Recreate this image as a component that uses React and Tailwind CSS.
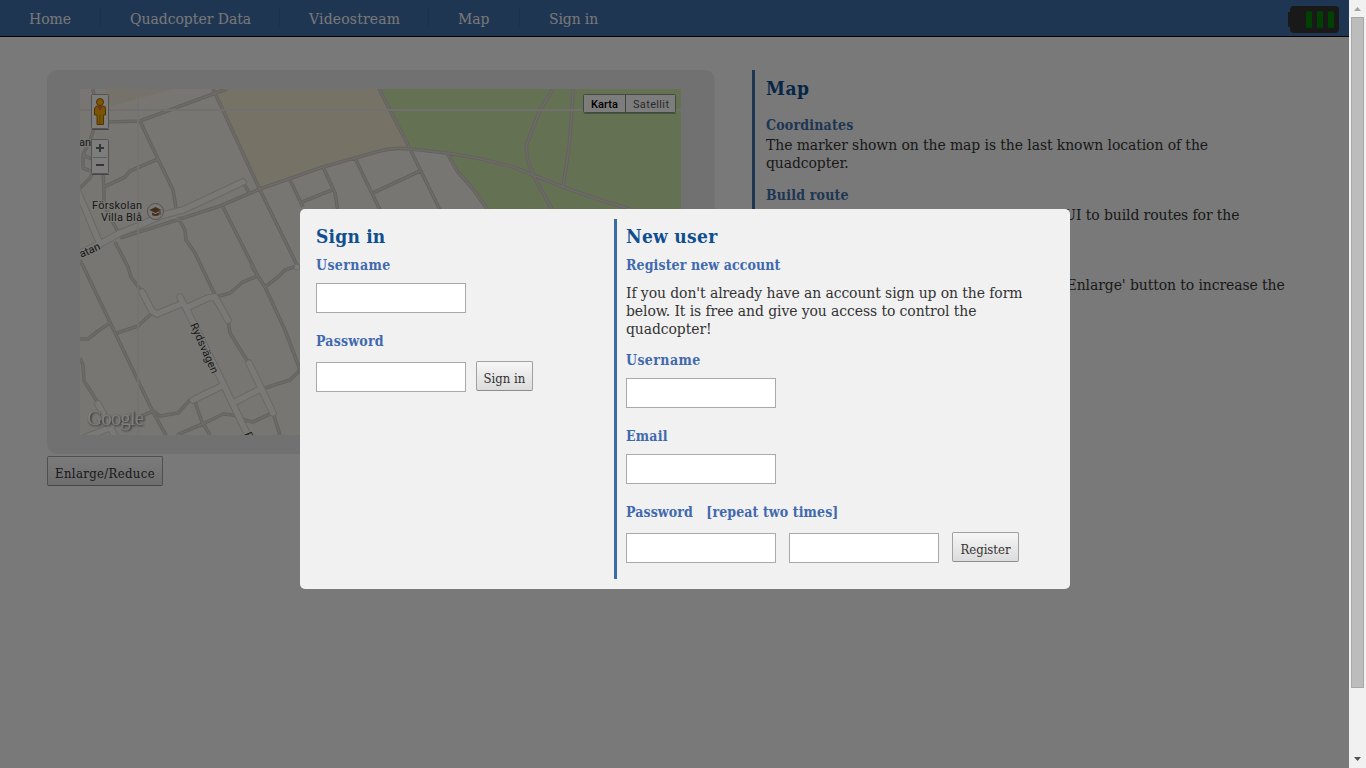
const serif = "font-['DejaVu_Serif_Condensed','DejaVu_Serif',serif]";

function Nav() {
  return (
    <nav className="flex h-[37px] shrink-0 items-center border-b border-black bg-[#3e6ca6] text-[15.5px] leading-[36px] text-[#f0f0f0]">
      <a className="w-[100px] pt-[2px] pl-[29px]">Home</a>
      <i className="h-[18px] w-px bg-[#38629a]" />
      <a className="w-[178px] pt-[2px] pl-[29px]">Quadcopter Data</a>
      <i className="h-[18px] w-px bg-[#38629a]" />
      <a className="w-[148px] pt-[2px] pl-[29px] tracking-[0.2px]">Videostream</a>
      <i className="h-[18px] w-px bg-[#38629a]" />
      <a className="w-[90px] pt-[2px] pl-[29px]">Map</a>
      <i className="h-[18px] w-px bg-[#38629a]" />
      <a className="pt-[2px] pl-[29px] tracking-[-0.1px]">Sign in</a>
      <svg className="mt-[2px] mr-[10px] ml-auto h-[27px] w-[51px]" viewBox="0 0 51 27">
        <rect x="0" y="6" width="5" height="15" rx="0.5" fill="#333" />
        <rect x="2" y="0" width="49" height="27" rx="4" fill="#333" />
        <rect x="18" y="5" width="6" height="17" rx="1.5" fill="#008000" />
        <rect x="29" y="5" width="6" height="17" rx="1.5" fill="#008000" />
        <rect x="40" y="5" width="6" height="17" rx="1.5" fill="#008000" />
      </svg>
    </nav>
  );
}

const paths = [
  "M93 89L94 95M94 128L91 138L83 155V168L93 172L90 178L80 188M83 155L92 159",
  "M103 173L104 188L104 205L118 232",
  "M104 187L125 177L130 171L158 159",
  "M108 122L140 121L213 94L227 89",
  "M140 121L158 159L173 190L176 208",
  "M213 89L260 190L297 265",
  "M120 238L183 218L220 206L260 189L323 167L355 158L380 151Q393 147 410 149L447 153L477 158L513 167L533 175L563 187L600 200L630 209",
  "M290 180L303 207M302 202L332 190M323 167L335 193L338 212M355 158L380 210M373 193L420 171M379 89L410 149L440 210",
  "M447 153L457 171L472 188L488 210",
  "M553 89L540 110L526 146L528 161L533 175L552 209M573 89L572 110L569 148L563 187",
  "M244 184L250 194M223 207L260 280M178 217L185 230L186 240L195 253L216 297",
  "M297 266L285 270L278 277L265 287M251 265L265 287L285 330L300 370",
  "M257 276L243 282L230 293L216 297M115 242L128 267L131 277L142 292",
  "M80 260L85 270L153 412L167 437M80 339H88L98 331L110 323M117 333L138 326L152 313",
  "M80 358L83 365L84 381L90 390L98 403M140 417L153 411L160 416L178 413L190 400",
  "M195 402L202 422L210 435M177 435L205 423L223 414L233 415L245 420L253 422L270 414",
  "M273 413L280 435M228 320L230 333L248 362M265 388L290 380L300 370",
];

const streets = [
  "M78 192L100 244L120 233L138 226L163 215L183 210L243 182M102 243L78 254",
  "M142 292L152 311L157 314L181 304M180 297L187 310L220 377L250 440",
  "M188 307L208 298L215 297L228 320M193 400L222 386M235 402L260 389M249 363L273 413",
  "M98 404L117 440M86 437L112 427",
];

function StreetMap() {
  const thin = paths.join("");
  const wide = streets.join("");
  return (
    <svg className="block h-[346px] w-[601px] font-[Roboto,sans-serif]" viewBox="80 89 601 346">
      <rect x="80" y="89" width="601" height="346" fill="#f0ede4" />
      <path d="M105 89H173L110 107Z" fill="#efe5d2" />
      <path d="M213 89H379L410 149L380 151L323 167L260 190Z" fill="#efe4cc" />
      <path d="M379 89H681V210H488L472 188L457 171L447 153L410 149Z" fill="#cbe2a6" />
      <g fill="none" strokeLinejoin="round">
        <path d={thin} stroke="#c8c5bd" strokeWidth="3.6" />
        <path d={thin} stroke="#dad7d0" strokeWidth="1.5" />
        <path d={wide} stroke="#d2cfc6" strokeWidth="7.5" strokeLinecap="round" />
        <path d={wide} stroke="#f4f3f0" strokeWidth="5.5" strokeLinecap="round" />
      </g>
      <circle cx="297" cy="267" r="3" fill="#f4f3f0" stroke="#d2cfc6" />
      <path d="M138 89V435" stroke="#e7e5e2" strokeWidth="1.6" />
      <path d="M80 110H681" stroke="#e3e0df" strokeWidth="2" />

      <g fill="#333" stroke="#f3f1eb" strokeWidth="2" paintOrder="stroke" fontSize="11">
        <text x="79" y="146">an</text>
        <text x="92" y="209" textLength="50">Förskolan</text>
        <text x="101" y="221" textLength="41">Villa Blå</text>
        <text transform="translate(83 257) rotate(-24)" x="-2" y="0">atan</text>
        <text transform="translate(190 325) rotate(66)" textLength="54">Rydsvägen</text>
        <text transform="translate(244 434) rotate(66)">R</text>
      </g>
      <g>
        <circle cx="155.500" cy="211.500" r="8" fill="#f4f2ee" stroke="#aaa49c" />
        <path d="M149.500 210L155.500 207L161.500 210L155.500 213ZM152 212.500L155.500 214.200L159 212.500V215Q155.500 217 152 215ZM159.500 210V215H160.500V210Z" fill="#8b5a36" />
      </g>

      <g stroke="#a9a7a2" fill="#fafafa">
        <rect x="91.500" y="94.500" width="17" height="34" rx="1" />
        <rect x="91.500" y="139.500" width="17" height="34" rx="1" />
      </g>
      <path d="M92 129.500H109M92 174.500H109" stroke="#8f8d88" />
      <path d="M93 157.500H107" stroke="#bbb" />
      <path d="M96 148H104M100 144V152M96 165H104" stroke="#6b6b6b" strokeWidth="2" />
      <path d="M95.500 107.500Q95.500 106 97 106H103Q105.500 106 105.500 108V115H103.500V124.500H97V115H94.500V108Z" fill="#f0ac00" stroke="#a86700" />
      <path d="M97 106.500H103L100 111Z" fill="#e4655a" />
      <circle cx="100" cy="102" r="3.500" fill="#f8b000" stroke="#a86700" />
      <path d="M100 115V124" stroke="#b87800" />

      <rect x="583.500" y="94.500" width="92" height="18" rx="1" fill="#fafafa" stroke="#86937a" />
      <path d="M625.500 95V112" stroke="#7d8b6d" />
      <path d="M584 113.500H676" stroke="#7e8b71" strokeOpacity=".7" />
      <text x="591" y="108" fontSize="11" fontWeight="500" textLength="27" fill="#000">Karta</text>
      <text x="633" y="108" fontSize="11" textLength="36" fill="#555">Satellit</text>
      <text x="87" y="425" fontSize="21" textLength="57" fill="#fafafa" className="font-['Liberation_Serif',serif] drop-shadow-[1px_1px_1px_#555]">Google</text>
    </svg>
  );
}

function Button({ className, children }) {
  return (
    <button className={`h-[30px] rounded-[2px] border border-[#a0a0a0] border-b-[#8c8c8c] bg-linear-to-b from-[#f6f6f6] to-[#dcdcdc] pt-[5px] text-[13px] leading-[20px] whitespace-nowrap text-[#333] ${className}`}>
      {children}
    </button>
  );
}

function Info() {
  return (
    <aside className="ml-[37px] h-[260px] w-[560px] border-l-3 border-[#3e6ca6] pl-[11px] text-[15.5px] leading-[18px] whitespace-nowrap text-[#333]">
      <h2 className="pt-[7px] text-[19px] leading-[23px] font-bold tracking-[0.5px] text-[#0f4d8c]">Map</h2>
      <Topic title="Coordinates">
        The marker shown on the map is the last known location of the<br />quadcopter.
      </Topic>
      <Topic title="Build route">
        In the future it will be possible from this GUI to build routes for the<br />quadcopter.
      </Topic>
      <Topic title="Enlarge map">
        When you want a larger map, click on the 'Enlarge' button to increase the<br />size.
      </Topic>
    </aside>
  );
}

function Topic({ title, children }) {
  return (
    <section className="h-[70px] pt-[16px]">
      <h3 className="h-[20px] text-[14px] font-bold tracking-[0.2px] text-[#3e6ca6]">{title}</h3>
      <p className="tracking-[-0.08px]">{children}</p>
    </section>
  );
}

function Field({ className = "" }) {
  return <input className={`block h-[30px] w-[150px] border border-[#a9a9a9] bg-white ${className}`} />;
}

function Label({ className = "", children }) {
  return <h3 className={`text-[14px] leading-[18px] font-bold whitespace-pre text-[#4169ae] ${className}`}>{children}</h3>;
}

function Dialog() {
  return (
    <div className="absolute top-[209px] left-[300px] flex h-[380px] w-[770px] rounded-[5px] bg-[#f1f1f1] py-[10px] text-[#333]">
      <section className="w-[314px] pl-[16px]">
        <h2 className="mt-[6px] text-[19px] leading-[23px] font-bold tracking-[0.2px] text-[#0f4f8f]">Sign in</h2>
        <Label className="mt-[8px] tracking-[0.4px]">Username</Label>
        <Field className="mt-[9px]" />
        <Label className="mt-[19px] tracking-[0.2px]">Password</Label>
        <div className="mt-[11px] flex gap-[10px]">
          <Field className="mt-[1px]" />
          <Button className="w-[57px]">Sign in</Button>
        </div>
      </section>
      <section className="flex-1 border-l-3 border-[#3b6ba6] pl-[9px]">
        <h2 className="mt-[6px] text-[19px] leading-[23px] font-bold tracking-[0.3px] text-[#0f4f8f]">New user</h2>
        <Label className="mt-[8px] tracking-[0.1px]">Register new account</Label>
        <p className="mt-[10px] text-[15.5px] leading-[18px] tracking-[-0.08px] whitespace-nowrap">
          If you don't already have an account sign up on the form<br />
          below. It is free and give you access to control the<br />
          quadcopter!
        </p>
        <Label className="mt-[13px] tracking-[0.4px]">Username</Label>
        <Field className="mt-[9px]" />
        <Label className="mt-[19px] tracking-[0.2px]">Email</Label>
        <Field className="mt-[9px]" />
        <Label className="mt-[19px] tracking-[0.1px]">{"Password   [repeat two times]"}</Label>
        <div className="mt-[11px] flex gap-[13px]">
          <Field className="mt-[1px]" />
          <Field className="mt-[1px]" />
          <Button className="w-[67px]">Register</Button>
        </div>
      </section>
    </div>
  );
}

function Scrollbar() {
  return (
    <div className="flex h-full w-[17px] flex-col items-center bg-[#f1f1f1]">
      <svg className="h-[17px] w-[17px] shrink-0" viewBox="0 0 17 17"><path d="M5 11L8.500 7L12 11Z" fill="#a3a3a3" /></svg>
      <div className="h-[671px] w-[13px] border border-[#a8a8a8] bg-[#bcbcbc]" />
      <svg className="mt-auto h-[17px] w-[17px] shrink-0" viewBox="0 0 17 17"><path d="M5 6L8.500 10L12 6Z" fill="#505050" /></svg>
    </div>
  );
}

export default function App() {
  return (
    <div className={`relative flex h-[768px] w-[1366px] overflow-hidden bg-[#f2f2f2] ${serif}`}>
      <div className="relative flex w-[1349px] flex-col">
        <Nav />
        <main className="flex pt-[33px] pl-[47px]">
          <div>
            <div className="h-[384px] w-[668px] rounded-[10px] bg-[#e3e3e3] pt-[19px] pl-[33px]">
              <StreetMap />
            </div>
            <Button className="mt-[2px] w-[116px] tracking-[0.35px]">Enlarge/Reduce</Button>
          </div>
          <Info />
        </main>
        <div className="absolute inset-0 bg-black/50" />
        <Dialog />
      </div>
      <Scrollbar />
    </div>
  );
}
